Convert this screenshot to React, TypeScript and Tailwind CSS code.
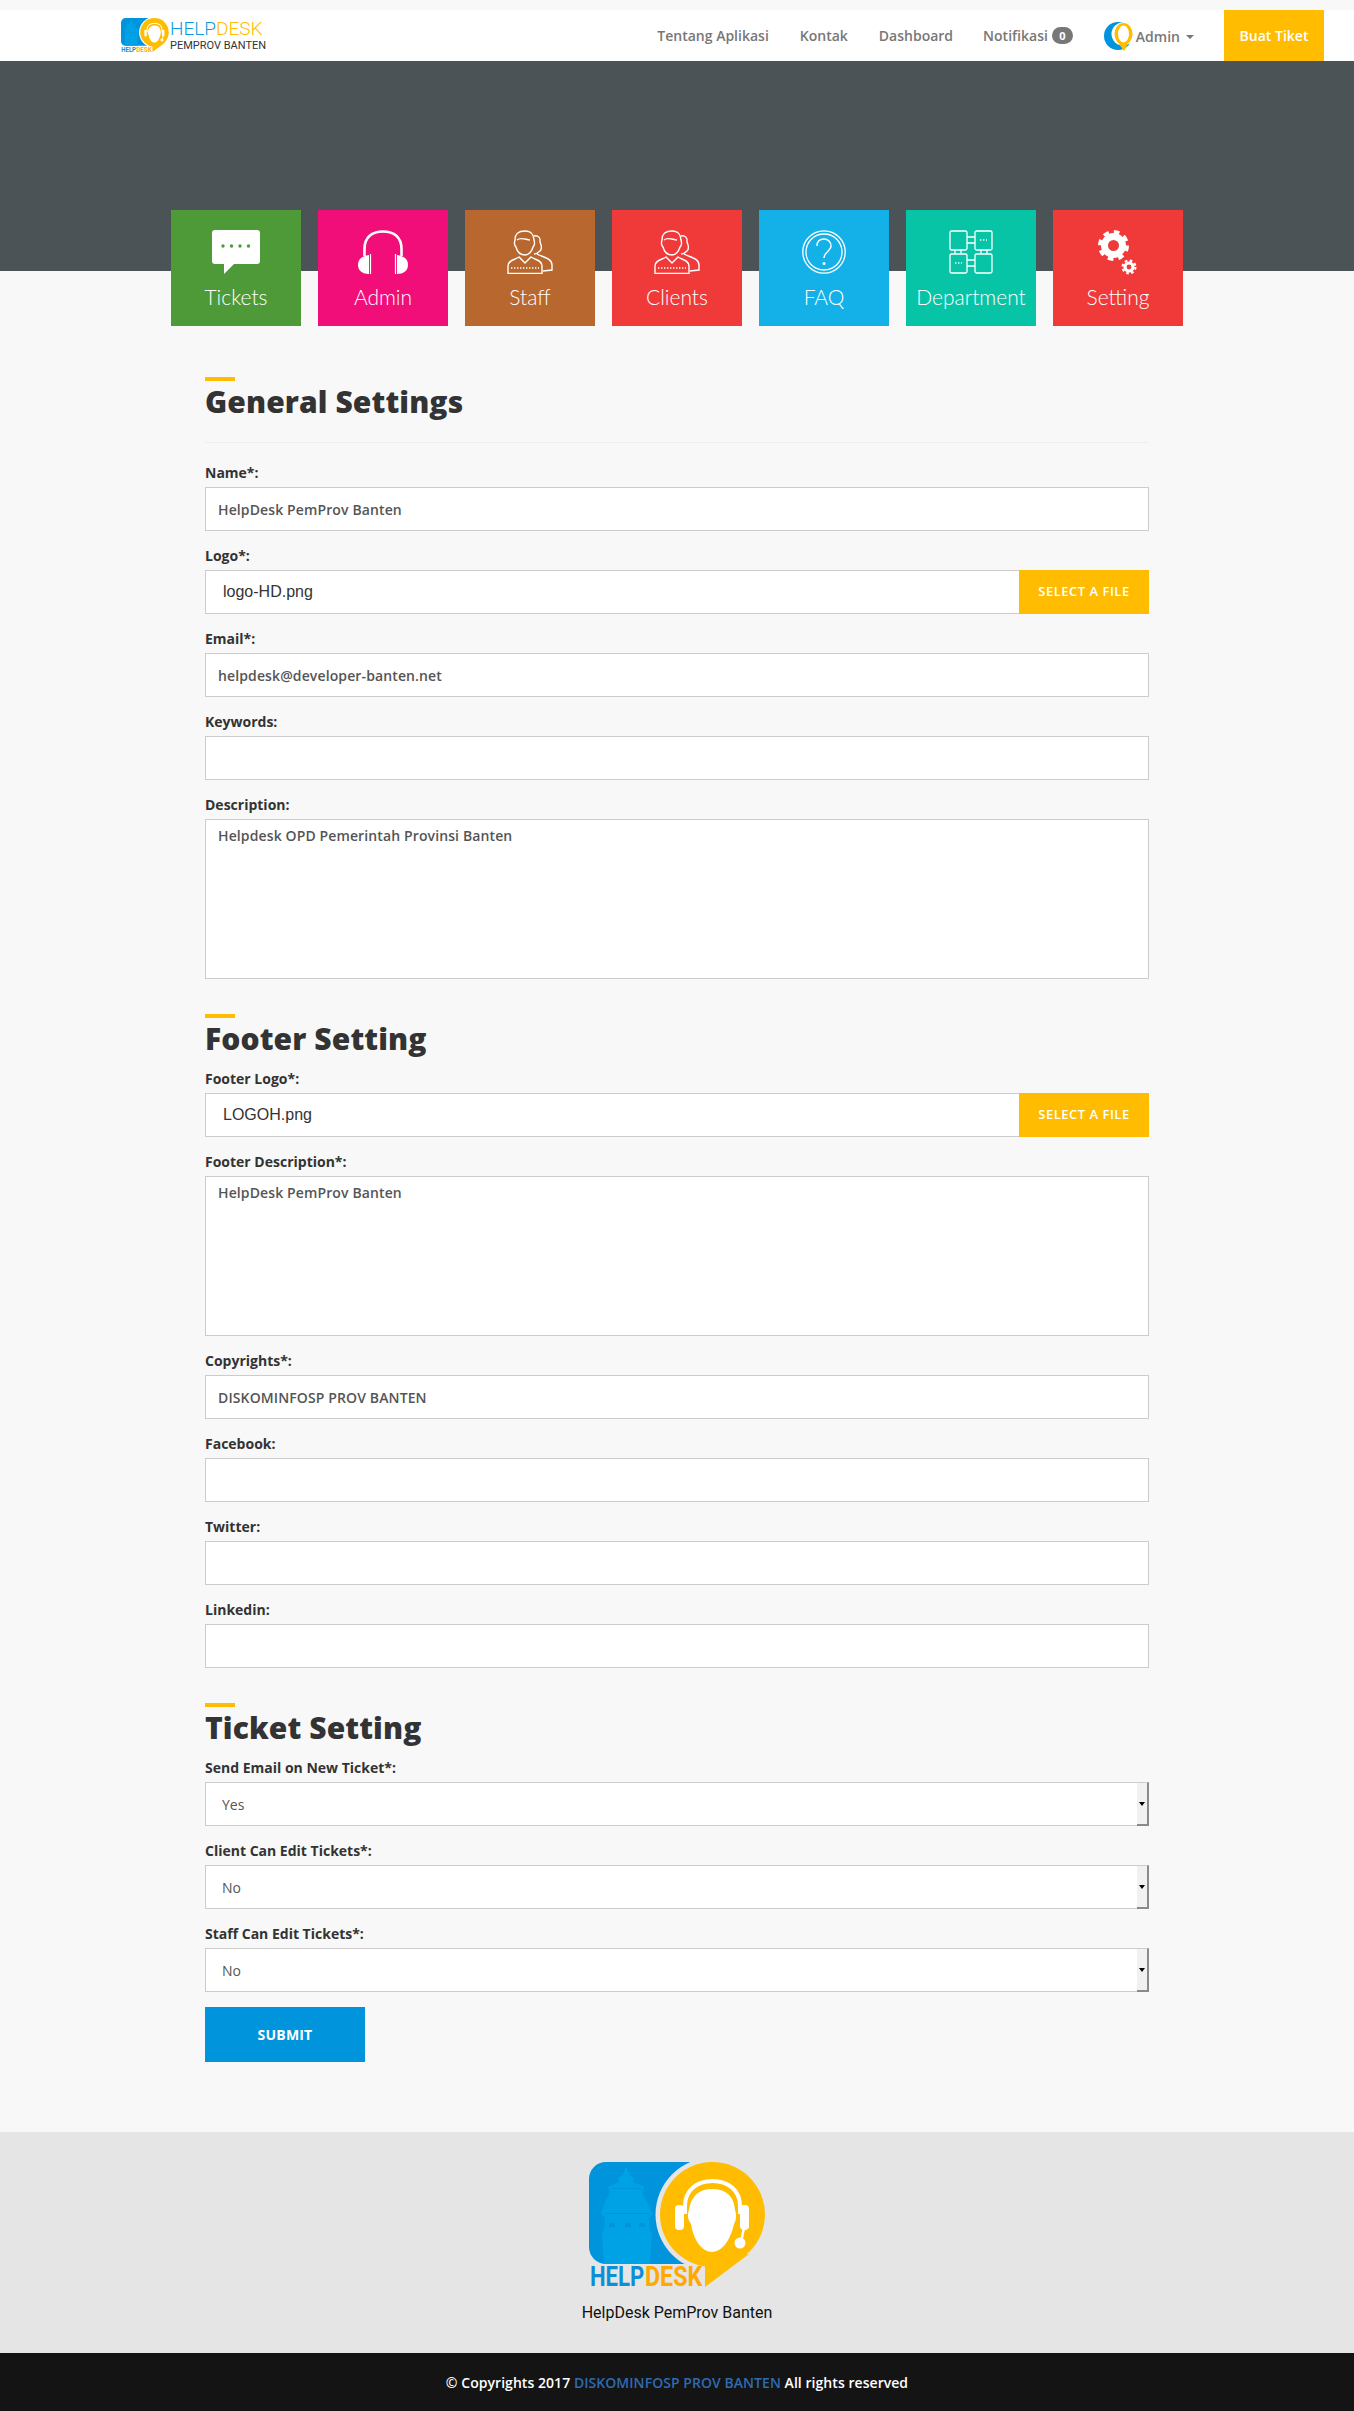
import type { ReactNode } from "react";

function LogoMark({ className, ringClass }: { className: string; ringClass: string }) {
  return (
    <svg viewBox="0 0 177 132" className={className}>
      <rect x="0" y="0" width="125" height="102" rx="17" className="fill-[#0094dd]" />
      {/* tower */}
      <path
        d="M37 3 L39 11 L45 17 L44 20 L55 25 L53 31 L58 40 L62 48 L64 52 L60 56 L61 68 L63 72 L61 102 L15 102 L13 72 L15 68 L16 56 L12 51 L16 40 L21 31 L19 25 L30 20 L29 17 L35 11 Z"
        className="fill-[#00a2e6]"
      />
      <path d="M20 61 h6 v4 h-6z M36 61 h6 v4 h-6z M50 61 h6 v4 h-6z M16 51 h44 v1 h-44z M22 26 h30 v1 h-30z" className="fill-[#0094dd]" />
      <circle cx="123.5" cy="52.5" r="57" className={ringClass} />
      <path d="M116 125 L116 96 L160 92 Z" className="fill-[#ffbc00]" />
      <circle cx="123.5" cy="52.5" r="52.5" className="fill-[#ffbc00]" />
      {/* headset */}
      <path d="M96 52 V44 C96 28 108 19 123.5 19 C139 19 151 28 151 44 V52" fill="none" stroke="#fff" strokeWidth="4" />
      <path
        d="M123 27 C137 27 145 34 146 48 C148 53 147 59 145 62 C142 76 134 90 123 90 C112 90 104 76 102 62 C99 58 98 53 100 48 C102 34 110 27 123 27 Z"
        fill="#fff"
      />
      <rect x="86" y="43" width="9" height="25" rx="4" fill="#fff" />
      <rect x="151" y="43" width="9" height="25" rx="4" fill="#fff" />
      <path d="M155 66 L152 80" stroke="#fff" strokeWidth="2.5" />
      <circle cx="151" cy="81" r="5.5" fill="#fff" />
      <text
        transform="translate(1 124) scale(0.82 1)"
        className="font-['Roboto',sans-serif] font-bold text-[27px] fill-[#0d8fd8]"
      >
        HELP
      </text>
      <text
        transform="translate(56 124) scale(0.86 1)"
        className="font-['Roboto',sans-serif] font-bold text-[27px] fill-[#ffa800]"
      >
        DESK
      </text>
    </svg>
  );
}

function TicketsIcon() {
  return (
    <svg viewBox="0 0 48 44" className="w-[48px] h-[44px]">
      <rect x="0" y="0" width="48" height="34" rx="3" fill="#fff" />
      <path d="M12 32 V44 L23 33 Z" fill="#fff" />
      <g fill="#4e9a38">
        <circle cx="11" cy="16" r="1.7" />
        <circle cx="19.5" cy="16" r="1.7" />
        <circle cx="28" cy="16" r="1.7" />
        <circle cx="36.5" cy="16" r="1.7" />
      </g>
    </svg>
  );
}

function HeadphonesIcon() {
  return (
    <svg viewBox="0 0 50 44" className="w-[50px] h-[44px]" fill="none" stroke="#fff">
      <path d="M6.5 26 V19 C6.5 7 14 1.5 25 1.5 C36 1.5 43.5 7 43.5 19 V26" strokeWidth="2.6" />
      <path d="M11 25 C4 26 0 29 0 35 C0 41 5 44 11 44 Z" fill="#fff" stroke="none" />
      <path d="M39 25 C46 26 50 29 50 35 C50 41 45 44 39 44 Z" fill="#fff" stroke="none" />
      <path d="M12.5 24 V44 M37.5 24 V44" strokeWidth="1.2" />
    </svg>
  );
}

function UsersIcon() {
  return (
    <svg viewBox="0 0 46 44" className="w-[46px] h-[44px]" fill="none" stroke="#fff" strokeWidth="1.4">
      <path d="M8 10 C8 3 12 1 18 1 C24 1 27 5 27 10 C28 13 28 15 26 17 C25 21 22 25 18 25 C13 25 10 21 9 17 C7 15 7 13 8 10 Z" />
      <path d="M10 10 C13 7 17 9 23 10" />
      <path d="M1 43.5 V36 C1 30 8 30 12 27 L18 33 L24 27 C28 30 35 30 35 36 V43.5 Z" />
      <path d="M4 38 H32" strokeDasharray="1.4 1.6" strokeWidth="1.6" />
      <path d="M27 6 C31 5 34 8 33 12 C34 15 36 18 33 21 C31 23 29 24 27 24" />
      <path d="M30 24 C35 27 45 28 45 35 V40 L36 41" />
    </svg>
  );
}

function FaqIcon() {
  return (
    <svg viewBox="0 0 44 44" className="w-[44px] h-[44px]" fill="none" stroke="#fff">
      <circle cx="22" cy="22" r="21.2" strokeWidth="1.3" />
      <circle cx="22" cy="22" r="18" strokeWidth="1.3" />
      <path d="M15 16 C15 11 18 9 22 9 C26 9 29 12 29 16 C29 21 22 22 22 28" strokeWidth="1.4" />
      <circle cx="22" cy="33.5" r="1.5" fill="#fff" stroke="none" />
    </svg>
  );
}

function DepartmentIcon() {
  return (
    <svg viewBox="0 0 44 44" className="w-[44px] h-[44px]" fill="none" stroke="#fff" strokeWidth="1.3">
      <rect x="1" y="1" width="17" height="19" rx="1.5" />
      <rect x="26" y="1" width="17" height="19" rx="1.5" />
      <rect x="1" y="24" width="17" height="19" rx="1.5" />
      <rect x="26" y="24" width="17" height="19" rx="1.5" />
      <path d="M18 7 H26 M18 13 H26 M18 30 H26 M18 36 H26 M6 20 V24 M12 20 V24 M32 20 V24 M38 20 V24" />
      <path d="M31 10 H38 M6 33 H13" strokeDasharray="1.4 1.6" strokeWidth="1.5" />
    </svg>
  );
}

function SettingIcon() {
  return (
    <svg viewBox="0 0 40 45" className="w-[40px] h-[45px]" fill="none" stroke="#fff">
      <circle cx="15.5" cy="15.5" r="9" strokeWidth="7" />
      <circle cx="15.5" cy="15.5" r="13.5" strokeWidth="4" strokeDasharray="5.6 4.99" />
      <circle cx="31" cy="37" r="4" strokeWidth="3.2" />
      <circle cx="31" cy="37" r="6.4" strokeWidth="2.2" strokeDasharray="2.6 2.42" />
    </svg>
  );
}

const tiles: { label: string; bg: string; icon: ReactNode }[] = [
  { label: "Tickets", bg: "bg-[#4e9a38]", icon: <TicketsIcon /> },
  { label: "Admin", bg: "bg-[#f10e78]", icon: <HeadphonesIcon /> },
  { label: "Staff", bg: "bg-[#b8672e]", icon: <UsersIcon /> },
  { label: "Clients", bg: "bg-[#ef3a39]", icon: <UsersIcon /> },
  { label: "FAQ", bg: "bg-[#14b0e8]", icon: <FaqIcon /> },
  { label: "Department", bg: "bg-[#08c4a6]", icon: <DepartmentIcon /> },
  { label: "Setting", bg: "bg-[#ef3a39]", icon: <SettingIcon /> },
];

function Heading({ title, className }: { title: string; className?: string }) {
  return (
    <div className={className}>
      <div className="w-[30px] h-[4px] bg-[#ffbc00]" />
      <h2 className="mt-[1px] text-[30px] leading-[40px] font-extrabold tracking-[0.1px] text-[#333]">{title}</h2>
    </div>
  );
}

function Field({ label, children }: { label: string; children: ReactNode }) {
  return (
    <div className="mb-[15px]">
      <label className="block mb-[4px] text-[14px] leading-[20px] font-bold text-[#333]">{label}</label>
      {children}
    </div>
  );
}

const inputClass =
  "block w-full h-[44px] px-[12px] border border-[#ccc] bg-white text-[14px] font-semibold tracking-[0.12px] text-[#555] outline-none";

function TextField({ label, value = "" }: { label: string; value?: string }) {
  return (
    <Field label={label}>
      <input type="text" defaultValue={value} className={inputClass} />
    </Field>
  );
}

function AreaField({ label, value }: { label: string; value: string }) {
  return (
    <Field label={label}>
      <textarea
        defaultValue={value}
        className="block w-full h-[160px] px-[12px] py-[6px] border border-[#ccc] bg-white text-[14px] leading-[20px] font-semibold tracking-[0.12px] text-[#555] outline-none resize-none"
      />
    </Field>
  );
}

function FileField({ label, file }: { label: string; file: string }) {
  return (
    <Field label={label}>
      <div className="flex h-[44px]">
        <div className="flex-1 flex items-center pl-[17px] border border-r-0 border-[#ccc] bg-white font-['Liberation_Sans',sans-serif] text-[16px] text-[#333]">
          {file}
        </div>
        <button className="w-[130px] bg-[#ffbc00] text-white text-[13px] font-semibold tracking-[0.5px]">
          SELECT A FILE
        </button>
      </div>
    </Field>
  );
}

function SelectField({ label, value }: { label: string; value: string }) {
  return (
    <Field label={label}>
      <div className="relative">
        <select
          defaultValue={value}
          className="block w-full h-[44px] pl-[16px] border border-[#ccc] bg-white text-[14px] font-medium text-[#555] outline-none appearance-none"
        >
          <option>Yes</option>
          <option>No</option>
        </select>
        <div className="absolute right-0 top-0 w-[12px] h-[44px] flex items-center justify-center border-t border-t-[#ccc] border-r-2 border-r-[#8a8a8a] border-b-2 border-b-[#8a8a8a] bg-[#f1f1f1]">
          <div className="w-0 h-0 border-x-[3px] border-x-transparent border-t-[4px] border-t-black" />
        </div>
      </div>
    </Field>
  );
}

function Nav() {
  return (
    <nav className="h-[51px] flex items-center bg-white pl-[121px] pr-[30px] text-[14px] font-semibold text-[#777]">
      <div className="flex items-center">
        <LogoMark className="w-[48px] h-[36px]" ringClass="fill-white" />
        <div className="ml-[1px] font-['Roboto',sans-serif]">
          <div className="text-[19px] leading-[20px] font-light">
            <span className="text-[#0d9be0]">HELP</span>
            <span className="text-[#ffbc00]">DESK</span>
          </div>
          <div className="text-[11px] leading-[13px] font-normal text-[#333]">PEMPROV BANTEN</div>
        </div>
      </div>
      <div className="ml-auto flex items-center h-full gap-[30px]">
        <a className="mr-[1px]">Tentang Aplikasi</a>
        <a className="mr-[1px]">Kontak</a>
        <a>Dashboard</a>
        <a className="flex items-center gap-[4px] mr-[1px]">
          Notifikasi
          <span className="w-[21px] h-[17px] rounded-full bg-[#777] text-white text-[11px] font-bold leading-[17px] text-center">
            0
          </span>
        </a>
        <a className="flex items-center">
          <svg viewBox="0 0 30 30" className="w-[30px] h-[30px] mr-[2px]">
            <circle cx="14" cy="15" r="14" fill="#0094dd" />
            <circle cx="19" cy="13" r="11.5" fill="#fff" />
            <ellipse cx="19.5" cy="13" rx="9" ry="11" fill="#ffbc00" />
            <ellipse cx="19.5" cy="13" rx="5.5" ry="8.5" fill="#fff" />
            <path d="M15 23 L20 30 L24 23 Z" fill="#ffbc00" />
          </svg>
          <span className="mt-[2px]">Admin</span>
          <span className="ml-[6px] mt-[2px] w-0 h-0 border-x-[4px] border-x-transparent border-t-[4px] border-t-[#777]" />
        </a>
        <button className="w-[100px] h-full bg-[#ffbc00] text-white text-[14px] font-semibold">Buat Tiket</button>
      </div>
    </nav>
  );
}

export default function App() {
  return (
    <div className="min-h-[2411px] bg-[#f8f8f8] font-['Open_Sans',sans-serif]">
      <div className="pt-[10px]">
        <Nav />
      </div>
      <div className="h-[210px] bg-[#4c5356]" />

      {/* Tiles */}
      <div className="relative -mt-[61px] flex justify-center gap-[17px]">
        {tiles.map((t) => (
          <div key={t.label} className={`${t.bg} w-[130px] h-[116px] pt-[20px] flex flex-col items-center`}>
            <div className="h-[44px] flex items-center">{t.icon}</div>
            <div className="mt-[8px] font-['Lato',sans-serif] font-light text-[21px] leading-[30px] text-white">
              {t.label}
            </div>
          </div>
        ))}
      </div>

      {/* Form */}
      <main className="w-[944px] ml-[205px] mt-[51px]">
        <Heading title="General Settings" />
        <hr className="mt-[20px] mb-[20px] border-t border-[#eee]" />
        <TextField label="Name*:" value="HelpDesk PemProv Banten" />
        <FileField label="Logo*:" file="logo-HD.png" />
        <TextField label="Email*:" value="helpdesk@developer-banten.net" />
        <TextField label="Keywords:" />
        <AreaField label="Description:" value="Helpdesk OPD Pemerintah Provinsi Banten" />

        <Heading title="Footer Setting" className="mt-[35px] mb-[10px]" />
        <FileField label="Footer Logo*:" file="LOGOH.png" />
        <AreaField label="Footer Description*:" value="HelpDesk PemProv Banten" />
        <TextField label="Copyrights*:" value="DISKOMINFOSP PROV BANTEN" />
        <TextField label="Facebook:" />
        <TextField label="Twitter:" />
        <TextField label="Linkedin:" />

        <Heading title="Ticket Setting" className="mt-[35px] mb-[10px]" />
        <SelectField label="Send Email on New Ticket*:" value="Yes" />
        <SelectField label="Client Can Edit Tickets*:" value="No" />
        <SelectField label="Staff Can Edit Tickets*:" value="No" />
        <button className="block w-[160px] h-[55px] bg-[#0094dd] text-white text-[14px] font-bold tracking-[0.2px]">
          SUBMIT
        </button>
      </main>

      {/* Footer */}
      <footer className="mt-[70px]">
        <div className="h-[221px] pt-[30px] bg-[#e5e5e5] flex flex-col items-center">
          <LogoMark className="w-[177px] h-[132px]" ringClass="fill-[#e5e5e5]" />
          <p className="mt-[7px] font-['Roboto',sans-serif] text-[16px] leading-[24px] text-[#111]">
            HelpDesk PemProv Banten
          </p>
        </div>
        <div className="h-[58px] flex items-center justify-center bg-[#141414] text-[14px] tracking-[0.05px] font-semibold text-white">
          <span>
            © Copyrights 2017 <span className="text-[#2f6bb0]">DISKOMINFOSP PROV BANTEN</span> All rights reserved
          </span>
        </div>
      </footer>
    </div>
  );
}
